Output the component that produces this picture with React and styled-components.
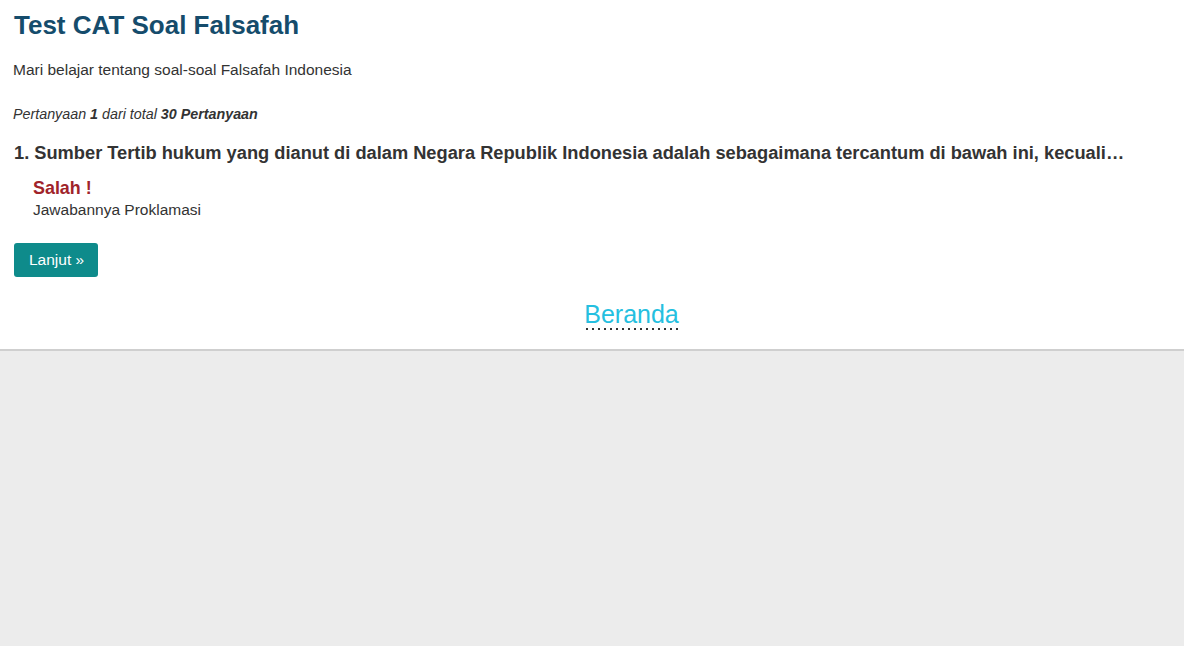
import React from "react";
import styled, { createGlobalStyle } from "styled-components";

const Global = createGlobalStyle`
  html, body { margin: 0; padding: 0; background: #ececec; }
  body { font-family: "Liberation Sans", Arial, sans-serif; color: #333; }
`;

const Page = styled.main`
  background: #fff;
  border-bottom: 2px solid #cfcfcf;
  padding: 8px 14px 19px 14px;
`;

const Title = styled.h1`
  margin: 0;
  font-size: 26px;
  line-height: 34px;
  font-weight: bold;
  color: #154c6c;
`;

const Lead = styled.p`
  margin: 18px 0 0 -1px;
  font-size: 15.5px;
  line-height: 20px;
  color: #333;
`;

const Counter = styled.p`
  margin: 25px 0 0 -1px;
  font-size: 14.3px;
  line-height: 18px;
  font-style: italic;
  color: #333;
  b { font-weight: bold; }
`;

const Question = styled.h2`
  margin: 19px 0 0 0;
  font-size: 18.25px;
  line-height: 22px;
  font-weight: bold;
  color: #333;
`;

const Feedback = styled.div`
  margin: 13px 0 0 19px;
  display: flex;
  flex-direction: column;
`;

const Verdict = styled.span`
  font-size: 17.9px;
  line-height: 23px;
  font-weight: bold;
  color: ${(p) => (p.$correct ? "#2a8a2a" : "#a0232a")};
`;

const Answer = styled.span`
  font-size: 15.5px;
  line-height: 20px;
  color: #333;
`;

const NextButton = styled.button`
  margin-top: 23px;
  display: inline-flex;
  align-items: center;
  height: 34px;
  padding: 0 14px 0 15px;
  border: none;
  border-radius: 3px;
  background: #0e8b8b;
  color: #fff;
  font-family: "Liberation Sans", Arial, sans-serif;
  font-size: 15.5px;
  cursor: pointer;
`;

const HomeRow = styled.nav`
  margin-top: 23px;
  display: flex;
  justify-content: center;
  padding-left: 79px;
`;

const HomeLink = styled.a`
  font-size: 25px;
  line-height: 28px;
  padding-bottom: 2px;
  color: #25bfe0;
  text-decoration: none;
  background-image: linear-gradient(to right, #333 0 2px, transparent 2px 6px);
  background-size: 6px 2px;
  background-repeat: repeat-x;
  background-position: 2px 100%;
`;

export default function App() {
  return (
    <>
      <Global />
      <Page>
        <Title>Test CAT Soal Falsafah</Title>
        <Lead>Mari belajar tentang soal-soal Falsafah Indonesia</Lead>
        <Counter>
          Pertanyaan <b>1</b> dari total <b>30 Pertanyaan</b>
        </Counter>
        <Question>
          1. Sumber Tertib hukum yang dianut di dalam Negara Republik Indonesia adalah sebagaimana tercantum di bawah ini, kecuali…
        </Question>
        <Feedback>
          <Verdict>Salah !</Verdict>
          <Answer>Jawabannya Proklamasi</Answer>
        </Feedback>
        <NextButton>Lanjut »</NextButton>
        <HomeRow>
          <HomeLink href="#">Beranda</HomeLink>
        </HomeRow>
      </Page>
    </>
  );
}
